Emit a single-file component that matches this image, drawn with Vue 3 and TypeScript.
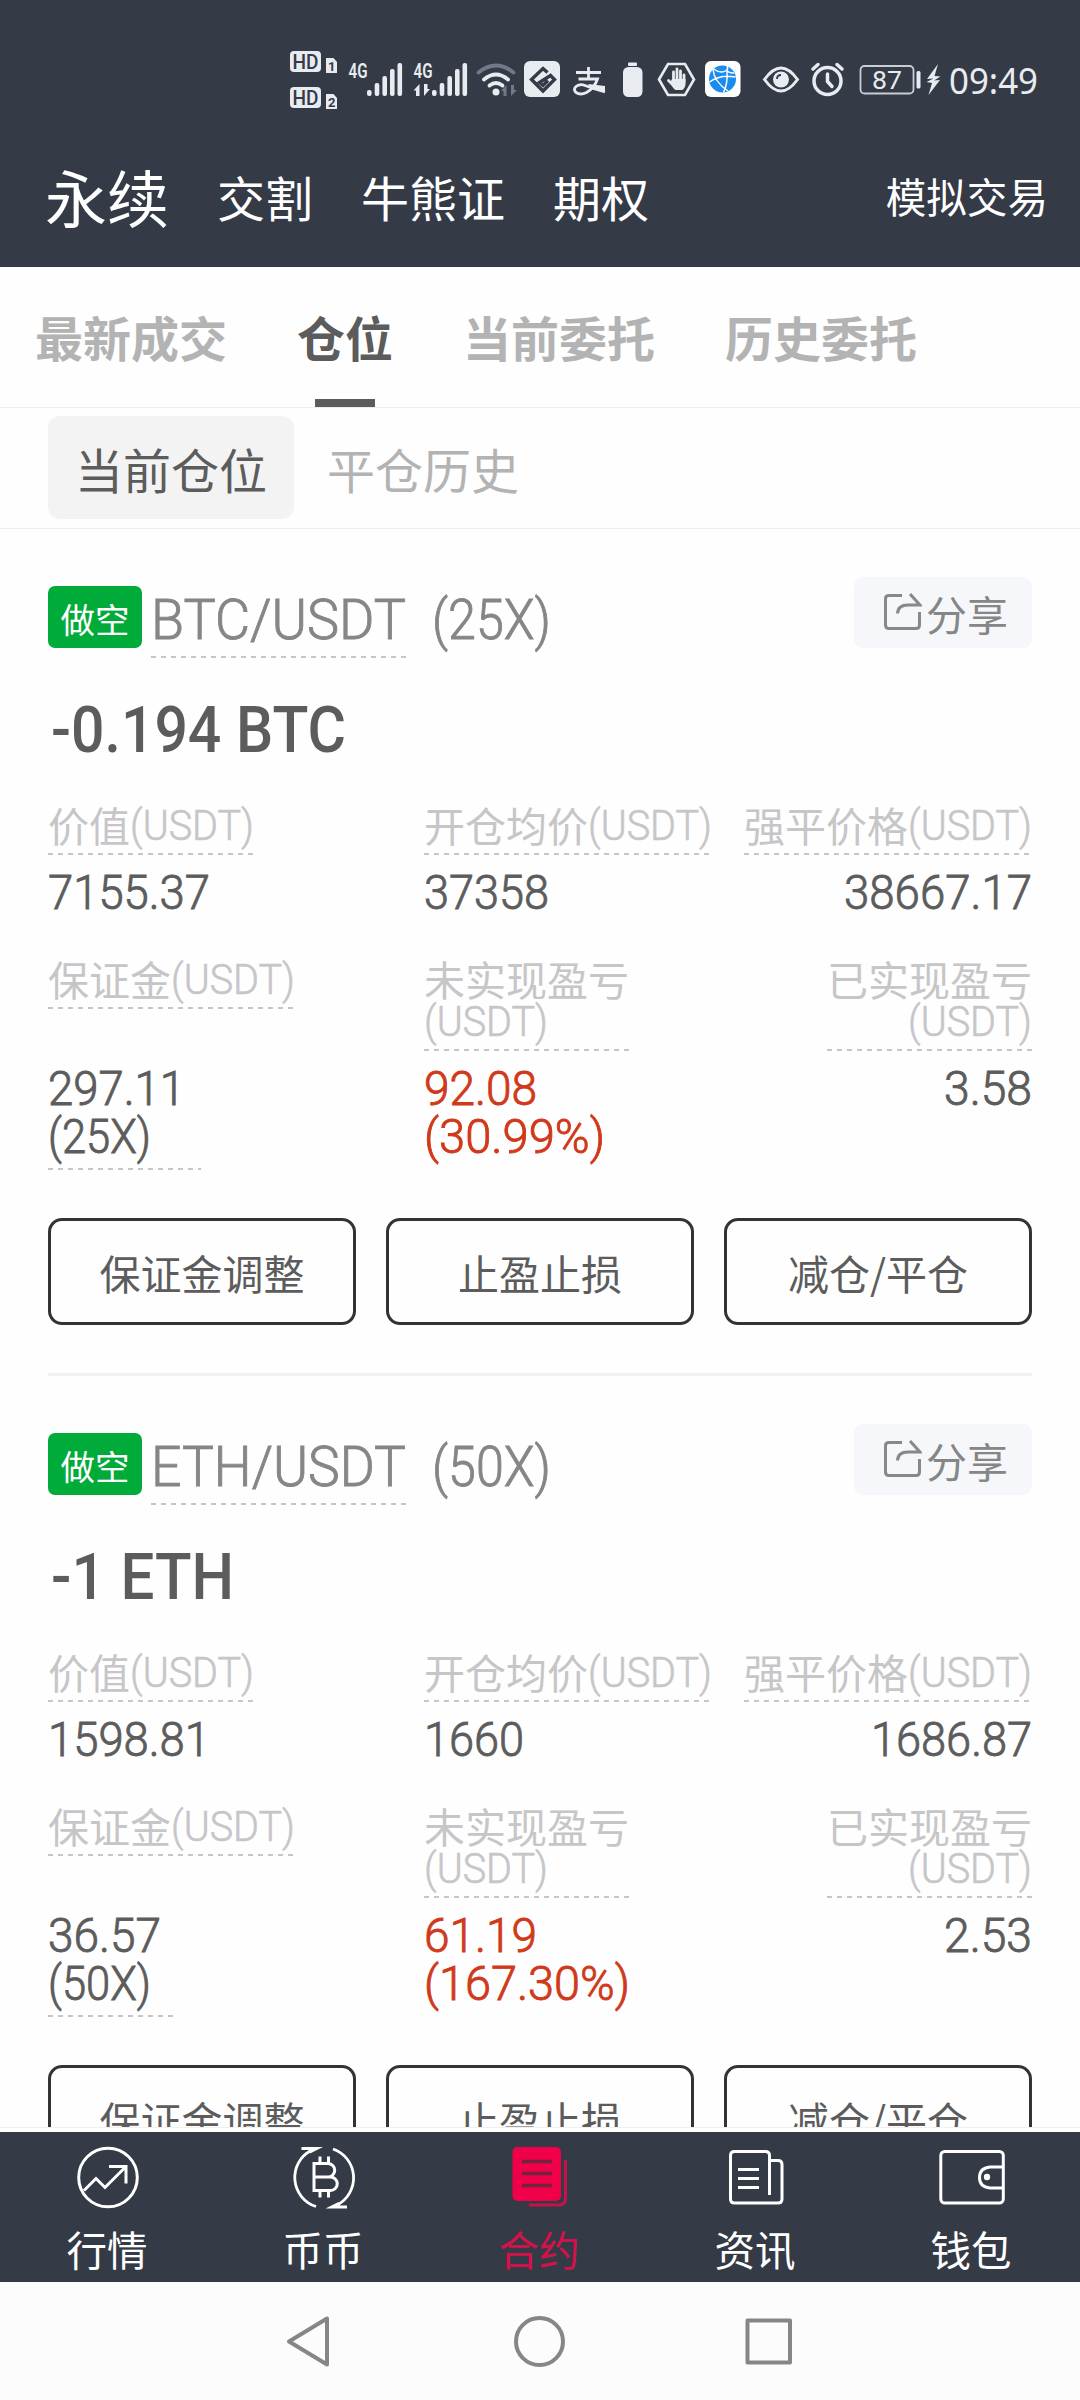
<script setup lang="ts">
import { h, type FunctionalComponent } from 'vue'

interface FitProps {
  t: string
  w: number
  size: number
  lh: number
  base: number
  weight?: number
  bold?: number
}

// Condensed latin/number run: Roboto squeezed to a fixed advance width.
const Fit: FunctionalComponent<FitProps> = (p) =>
  h('svg', { width: p.w, height: p.lh, style: { display: 'block', overflow: 'visible', flex: 'none' } }, [
    h(
      'text',
      {
        x: 0,
        y: p.base,
        textLength: p.w,
        lengthAdjust: 'spacingAndGlyphs',
        fill: 'currentColor',
        stroke: 'currentColor',
        'stroke-width': p.bold ?? 0.6,
        'font-family': 'Roboto, "Liberation Sans", sans-serif',
        'font-size': p.size,
        'font-weight': p.weight ?? 300,
      },
      p.t,
    ),
  ])
Fit.props = ['t', 'w', 'size', 'lh', 'base', 'weight', 'bold']

type Run = [text: string, width: number]

interface Position {
  pair: Run
  lever: Run
  amount: Run
  value: Run
  entry: Run
  liq: Run
  margin: [Run, Run]
  marginWidth: number
  unreal: [Run, Run]
  real: Run
}

const positions: Position[] = [
  {
    pair: ['BTC/USDT', 255],
    lever: ['(25X)', 119],
    amount: ['-0.194 BTC', 295],
    value: ['7155.37', 162],
    entry: ['37358', 125],
    liq: ['38667.17', 188],
    margin: [['297.11', 137], ['(25X)', 103]],
    marginWidth: 153,
    unreal: [['92.08', 113], ['(30.99%)', 181]],
    real: ['3.58', 88],
  },
  {
    pair: ['ETH/USDT', 255],
    lever: ['(50X)', 119],
    amount: ['-1 ETH', 183],
    value: ['1598.81', 162],
    entry: ['1660', 100],
    liq: ['1686.87', 161],
    margin: [['36.57', 113], ['(50X)', 103]],
    marginWidth: 125,
    unreal: [['61.19', 113], ['(167.30%)', 206]],
    real: ['2.53', 88],
  },
]

const markets = ['永续', '交割', '牛熊证', '期权']
const tabs = ['最新成交', '仓位', '当前委托', '历史委托']
const actions = ['保证金调整', '止盈止损', '减仓/平仓']
</script>

<template>
  <div class="page">
    <header class="top">
      <svg class="status" width="1080" height="130" viewBox="0 0 1080 130" fill="#e8ebf0">
        <g v-for="(dy, i) in [0, 36]" :key="i" :transform="`translate(0 ${dy})`">
          <rect x="290" y="51" width="31" height="21" rx="4" />
          <text x="292.500" y="68.500" font-size="20" font-weight="500" textLength="26" lengthAdjust="spacingAndGlyphs" fill="#343a46">HD</text>
          <path d="M326 58h7.500l3.500 4v11h-11z" />
          <text x="328" y="71" font-size="13" font-weight="700" fill="#343a46">{{ i + 1 }}</text>
        </g>
        <g v-for="x in [0, 65]" :key="x" :transform="`translate(${x} 0)`">
          <text x="348.500" y="78" font-size="20" font-weight="600" textLength="19" lengthAdjust="spacingAndGlyphs">4G</text>
          <rect x="367" y="90" width="4.600" height="6" rx="2" />
          <rect x="374.700" y="83" width="4.600" height="13" rx="2" />
          <rect x="382.400" y="76" width="4.600" height="20" rx="2" />
          <rect x="390" y="69" width="4.600" height="27" rx="2" />
          <rect x="397.500" y="63" width="4.600" height="33" rx="2" />
        </g>
        <path d="M413.500 90.500l6-6.500v12h-3.500v-5.500zM430 89l-6 7v-12h3.500v5z" />
        <g fill="none" stroke="#e8ebf0" stroke-width="3.800" stroke-linecap="round">
          <path d="M478.500 72.500q17.500-14 35 0" stroke="#727985" />
          <path d="M484 79.500q12-10 24 0" />
          <path d="M489.500 85.500q6.500-5 13 0" />
        </g>
        <circle cx="496" cy="92" r="3.500" />
        <path d="M501 91l5.500-6v11h-3v-5zM517 90l-6 6v-11h3v5z" fill="#727985" />
        <rect x="524" y="61" width="36" height="36" rx="6" />
        <path d="M547.500 72.500L543 68.500 531.500 79.500 543 91 554.500 79.500 550.500 75.500 539.500 82.500 543 85.500 548 80.500" fill="none" stroke="#343a46" stroke-width="3.400" />
        <g fill="none" stroke="#e8ebf0" stroke-width="2.800">
          <path d="M576 72.500h25M588.500 67v12M578.500 79h19q-3 9-11 13.500-6 3-10.500 0-3-3 0-6 4-3 9-1 8 3 20 6.500" />
        </g>
        <path d="M588 84l17 2v6l-15-5z" />
        <rect x="628" y="62.500" width="9" height="3.500" rx="1" />
        <rect x="623" y="67" width="19.500" height="30" rx="5.500" />
        <path d="M659 79.500l9-15.500h17l9 15.500-9 15.500h-17z" fill="none" stroke="#e8ebf0" stroke-width="2.600" />
        <g stroke="#e8ebf0" stroke-width="2.800" stroke-linecap="round" fill="none">
          <path d="M673.500 80v-8M677 79v-10M680.500 80v-9M684 82v-7M672 84l-3.500-3.500" />
        </g>
        <path d="M672 79h13.500v6q-1 4-3 5h-7q-2-1-5.500-7z" />
        <rect x="705" y="61" width="35.500" height="36" rx="6" fill="#fff" />
        <circle cx="722.500" cy="79" r="13.500" fill="#1a8cee" />
        <path d="M713.500 69q7 5 13 1.500 2-2 .500-5M726.500 70.500q3 3 7.500 2.500M709.500 82q11-8 26-5M713 69.500q1 12 15 21.500M727 70.500q1 13-3.500 22" fill="none" stroke="#fff" stroke-width="1.400" />
        <path d="M764.500 79.500q16.500-23 33 0-16.500 23-33 0z" fill="none" stroke="#e8ebf0" stroke-width="3" />
        <circle cx="781" cy="79.500" r="8" />
        <path d="M777 79q0-4 4-4" fill="none" stroke="#343a46" stroke-width="1.800" />
        <circle cx="827.500" cy="81" r="13.500" fill="none" stroke="#e8ebf0" stroke-width="3.500" />
        <path d="M827.500 74v7.500l4.500 5M813 69l5-4.500M842 69l-5-4.500" fill="none" stroke="#e8ebf0" stroke-width="3.500" stroke-linecap="round" />
        <rect x="860.500" y="66" width="53" height="27.500" rx="4" fill="none" stroke="#c9cdd4" stroke-width="1.800" />
        <rect x="916.500" y="71" width="4" height="17.500" rx="1.500" />
        <text x="872" y="89" font-size="26.500" textLength="30" lengthAdjust="spacingAndGlyphs">87</text>
        <path d="M938 64l-11 15 6.500-.500-7 3.500 5.500 1-3.500 12 11.500-15-6 .500 6.500-4-6-.500z" />
        <text x="949" y="94" font-size="37" textLength="89" lengthAdjust="spacingAndGlyphs" class="clock">09:49</text>
      </svg>
      <nav class="markets">
        <span v-for="(m, i) in markets" :key="m" :class="{ big: i === 0 }">{{ m }}</span>
        <span class="demo">模拟交易</span>
      </nav>
    </header>

    <nav class="tabs">
      <span v-for="(t, i) in tabs" :key="t" class="tab" :class="{ on: i === 1 }">{{ t }}</span>
    </nav>
    <nav class="subtabs">
      <span class="pill">当前仓位</span>
      <span class="plain">平仓历史</span>
    </nav>

    <main class="list">
      <section v-for="p in positions" :key="p.pair[0]" class="card">
        <div class="head">
          <span class="badge">做空</span>
          <div class="pair dash"><Fit :t="p.pair[0]" :w="p.pair[1]" :size="56" :lh="79" :base="62" :bold="0.9" /></div>
          <Fit class="lever" :t="p.lever[0]" :w="p.lever[1]" :size="56" :lh="79" :base="62" :bold="0.9" />
          <button class="share">
            <svg width="38" height="38" viewBox="0 0 38 38" fill="none" stroke="#888" stroke-width="3">
              <path d="M18 2.500H5Q1.500 2.500 1.500 5.500V32Q1.500 35.500 5 35.500H32Q35.500 35.500 35.500 32V19" />
              <path d="M26 1L36 12H24Q14 12 13.500 20.500" />
            </svg>
            <span>分享</span>
          </button>
        </div>
        <Fit class="amount" :t="p.amount[0]" :w="p.amount[1]" :size="64" :lh="80" :base="72" :weight="500" :bold="0" />

        <div class="row labels one">
          <div class="c1"><div class="label dash"><span>价值</span><Fit t="(USDT)" :w="124" :size="42" :lh="42" :base="35" /></div></div>
          <div class="label dash"><span>开仓均价</span><Fit t="(USDT)" :w="124" :size="42" :lh="42" :base="35" /></div>
          <div class="label dash end"><span>强平价格</span><Fit t="(USDT)" :w="124" :size="42" :lh="42" :base="35" /></div>
        </div>
        <div class="row values one">
          <div class="c1"><Fit :t="p.value[0]" :w="p.value[1]" :size="49" :lh="48" :base="42" :bold="0.9" /></div>
          <Fit :t="p.entry[0]" :w="p.entry[1]" :size="49" :lh="48" :base="42" :bold="0.9" />
          <Fit class="end" :t="p.liq[0]" :w="p.liq[1]" :size="49" :lh="48" :base="42" :bold="0.9" />
        </div>

        <div class="row labels two">
          <div class="c1"><div class="label dash"><span>保证金</span><Fit t="(USDT)" :w="124" :size="42" :lh="42" :base="35" /></div></div>
          <div class="label dash tall"><span>未实现盈亏</span><Fit t="(USDT)" :w="124" :size="42" :lh="42" :base="35" /></div>
          <div class="label dash tall end"><span>已实现盈亏</span><Fit t="(USDT)" :w="124" :size="42" :lh="42" :base="35" /></div>
        </div>
        <div class="row values two">
          <div class="c1">
            <div class="margin dash" :style="{ width: p.marginWidth + 'px' }">
              <Fit v-for="r in p.margin" :key="r[0]" :t="r[0]" :w="r[1]" :size="49" :lh="48" :base="42" :bold="0.9" />
            </div>
          </div>
          <div class="loss">
            <Fit v-for="r in p.unreal" :key="r[0]" :t="r[0]" :w="r[1]" :size="49" :lh="48" :base="42" :bold="0.9" />
          </div>
          <Fit class="end" :t="p.real[0]" :w="p.real[1]" :size="49" :lh="48" :base="42" :bold="0.9" />
        </div>

        <div class="actions">
          <button v-for="a in actions" :key="a">{{ a }}</button>
        </div>
      </section>
    </main>

    <nav class="bottom">
      <a class="item">
        <svg width="72" height="72" viewBox="0 0 72 72" fill="none" stroke="#fff" stroke-width="3">
          <circle cx="36" cy="36.500" r="29.300" />
          <path d="M12 49.500L24 37.500l9 9L53.500 26M37 25.500h17V42.500" />
        </svg>
        <span>行情</span>
      </a>
      <a class="item">
        <svg width="72" height="72" viewBox="0 0 72 72" fill="none" stroke="#fff" stroke-width="2.800">
          <path d="M28 65.500A30.500 30.500 0 0 1 23 9.500M45 8A30.500 30.500 0 0 1 49 64" />
          <path d="M13.500 6H35L22 12.500 20.500 9H13.500zM59 67.500H37.500L50.500 61 52 64.500H59z" fill="#fff" stroke="none" />
          <path d="M26 22.500h14a6.750 6.750 0 0 1 0 13.500H26zM26 36h16.500a6.750 6.750 0 0 1 0 13.500H26zM32 15.500v7M40.500 15.500v7M32 49.500v7M40.500 49.500v7" stroke-width="3" />
        </svg>
        <span>币币</span>
      </a>
      <a class="item on">
        <svg width="72" height="72" viewBox="0 0 72 72">
          <rect x="8.500" y="6" width="48.500" height="54" rx="5" fill="#f00048" />
          <path d="M18 20.500h30M18 32.500h30M18 44.500h30" stroke="#74233f" stroke-width="3.600" />
          <path d="M61.500 19V57.500q0 6-6 6.500H25" fill="none" stroke="#c41349" stroke-width="3" />
        </svg>
        <span>合约</span>
      </a>
      <a class="item">
        <svg width="72" height="72" viewBox="0 0 72 72" fill="none" stroke="#fff" stroke-width="3">
          <path d="M49.500 54V14.500q0-4-4-4H14.500q-4 0-4 4V58q0 4 4 4H58q4 0 4-4V23.500q0-4-4-4h-8.500M18 28.500h21M18 37.500h21M18 46.500h21" />
        </svg>
        <span>资讯</span>
      </a>
      <a class="item">
        <svg width="72" height="72" viewBox="0 0 72 72" fill="none" stroke="#fff" stroke-width="3">
          <rect x="4.800" y="10.500" width="62.500" height="51.500" rx="4" />
          <path d="M67 26H54q-10.500 1-10.500 10.500T54 47H67" />
          <circle cx="51" cy="36" r="3.200" fill="#fff" stroke="none" />
        </svg>
        <span>钱包</span>
      </a>
    </nav>

    <footer class="system">
      <svg width="540" height="60" viewBox="0 0 540 60" fill="none" stroke="#868686" stroke-width="4" stroke-linejoin="round">
        <path d="M58 7.500V53.500L20 30.500z" />
        <circle cx="270.500" cy="30.500" r="23.500" />
        <rect x="478.500" y="9.500" width="42.500" height="42" />
      </svg>
    </footer>
  </div>
</template>

<style>
body {
  margin: 0;
  background: #fff;
}
</style>

<style scoped>
.page {
  width: 1080px;
  height: 2400px;
  overflow: hidden;
  display: flex;
  flex-direction: column;
  background: #fefefe;
  color: #5c5c5c;
  font-family: 'Noto Sans CJK SC', sans-serif;
}
.page > * {
  flex: none;
  box-sizing: border-box;
}
button {
  font: inherit;
  color: inherit;
  margin: 0;
  padding: 0;
  border: 0;
  box-sizing: border-box;
}
.top {
  height: 267px;
  background: #343a46;
  color: #fff;
}
.status {
  display: block;
  font-family: Roboto, sans-serif;
}
.clock {
  font-family: 'Noto Sans', sans-serif;
}
.markets {
  display: flex;
  align-items: center;
  height: 131px;
  padding: 0 32px 0 45px;
  gap: 48px;
  font-size: 48px;
  line-height: 60px;
}
.markets .big {
  font-size: 62px;
}
.markets .demo {
  margin-left: auto;
  font-size: 40.600px;
}
.tabs {
  height: 141px;
  border-bottom: 1px solid #ededed;
  display: flex;
  gap: 70px;
  padding-left: 35px;
  font-size: 48px;
  font-weight: 700;
  color: #b3b3b3;
}
.tab {
  height: 140px;
  line-height: 138px;
  box-sizing: border-box;
}
.tab.on {
  color: #5c5c5c;
  background: linear-gradient(#5c5c5c, #5c5c5c) center bottom / 60px 8px no-repeat;
}
.subtabs {
  height: 121px;
  border-bottom: 1px solid #ededed;
  padding: 8px 0 0 48px;
  display: flex;
  font-size: 48px;
}
.pill {
  width: 246px;
  height: 103px;
  line-height: 105px;
  text-align: center;
  border-radius: 12px;
  background: #f3f3f3;
}
.plain {
  margin-left: 33px;
  line-height: 105px;
  color: #b3b3b3;
}
.list {
  height: 1599px;
  overflow: hidden;
}
.card {
  height: 847px;
  box-sizing: border-box;
  margin: 0 48px;
  padding-top: 48px;
  border-bottom: 3px solid #f2f2f2;
}
.head {
  display: flex;
  height: 81px;
  color: #868686;
}
.badge {
  width: 94px;
  height: 62px;
  margin: 9px 9px 0 0;
  border-radius: 7px;
  background: #00ab3a;
  color: #fff;
  font-size: 34.500px;
  line-height: 65px;
  text-align: center;
}
.dash {
  background: repeating-linear-gradient(90deg, #c6c6c8 0 5px, transparent 5px 10px) left bottom / 100% 2px no-repeat;
}
.pair {
  height: 81px;
}
.lever {
  margin-left: 26px;
}
.share {
  width: 178px;
  height: 71px;
  margin-left: auto;
  border-radius: 9px;
  background: #f5f7fa;
  display: flex;
  align-items: center;
  padding-left: 30px;
  font-size: 41px;
}
.share svg {
  margin: -1px 4px 0 0;
}
.amount {
  margin: 22px 0 0 3px;
}
.row {
  display: flex;
  align-items: flex-start;
}
.c1 {
  width: 376px;
}
.end {
  margin-left: auto;
}
.labels {
  color: #c6c6c9;
}
.labels.one {
  margin-top: 45px;
  height: 50px;
}
.labels.two {
  margin-top: 44px;
  height: 92px;
}
.label {
  display: inline-flex;
  height: 50px;
  font-size: 41px;
  line-height: 38px;
  white-space: nowrap;
}
.label span {
  height: 42px;
}
.label.tall {
  flex-direction: column;
  height: 92px;
}
.label.tall.end {
  align-items: flex-end;
}
.values {
  margin-top: 12px;
}
.values.one {
  height: 48px;
}
.values.two {
  height: 107px;
}
.margin {
  height: 107px;
}
.loss {
  color: #d0391a;
}
.actions {
  display: flex;
  justify-content: space-between;
  margin-top: 48px;
}
.actions button {
  width: 308px;
  height: 107px;
  border: 3px solid #333;
  border-radius: 14px;
  background: transparent;
  font-size: 41px;
  line-height: 101px;
  padding-top: 1px;
  text-align: center;
}
.bottom {
  margin-top: 4px;
  height: 150px;
  background: #343a46;
  display: flex;
  color: #fff;
  box-shadow: 0 -4px 0 #fff, 0 -5px 0 #f0f0f0;
}
.item {
  flex: 1;
  display: flex;
  flex-direction: column;
  align-items: center;
  padding-top: 9px;
  font-size: 40.500px;
  line-height: 48px;
}
.item svg {
  display: block;
}
.item span {
  margin: 12px 2px 0 0;
}
.item.on {
  color: #d4114a;
}
.system {
  height: 118px;
  background: #fcfcfc;
  display: flex;
  justify-content: center;
  padding: 29px 2px 0 0;
}
</style>
